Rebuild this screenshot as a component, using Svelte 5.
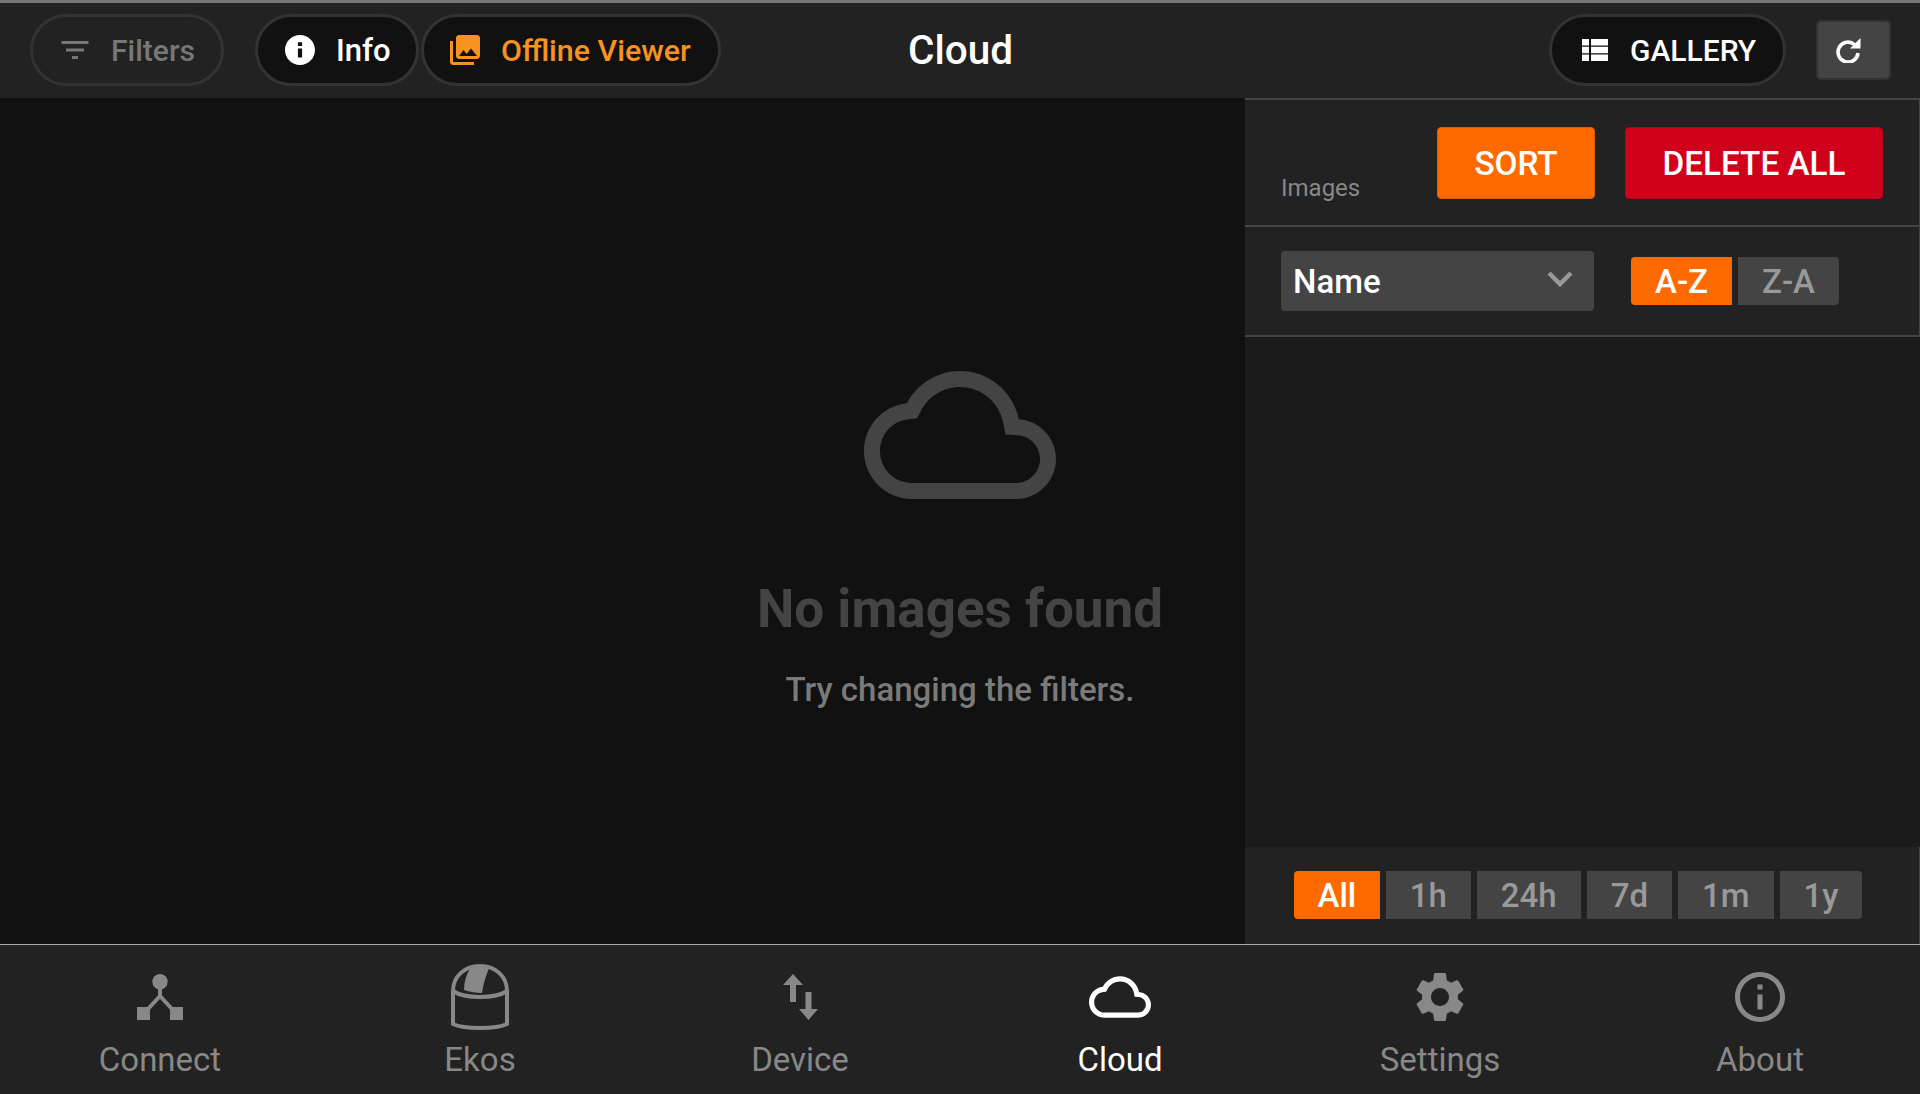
<script>
  const times = ["All", "1h", "24h", "7d", "1m", "1y"];
  const cloudPath =
    "M19.35 10.04C18.67 6.59 15.64 4 12 4 9.11 4 6.6 5.64 5.35 8.04 2.34 8.36 0 10.91 0 14c0 3.31 2.69 6 6 6h13c2.76 0 5-2.24 5-5 0-2.64-2.05-4.78-4.65-4.96zM19 18H6c-2.21 0-4-1.79-4-4 0-2.05 1.53-3.76 3.56-3.97l1.07-.11.5-.95C8.08 7.14 9.94 6 12 6c2.62 0 4.88 1.86 5.39 4.43l.3 1.5 1.53.11c1.56.1 2.78 1.41 2.78 2.96 0 1.65-1.35 3-3 3z";
</script>

<div class="app">
  <header class="topbar">
    <div class="top-left">
      <button type="button" class="pill ghost filters">
        <svg width="36" height="36" viewBox="0 0 24 24"><path d="M10 18h4v-2h-4v2zM3 6v2h18V6H3zm3 7h12v-2H6v2z" /></svg>
        Filters
      </button>
      <button type="button" class="pill info">
        <svg width="36" height="36" viewBox="0 0 24 24"><path d="M12 2C6.48 2 2 6.48 2 12s4.48 10 10 10 10-4.48 10-10S17.52 2 12 2zm1.4 15h-2.8v-6h2.8v6zm0-7.6h-2.8V6.8h2.8v2.6z" /></svg>
        Info
      </button>
      <button type="button" class="pill offline">
        <svg width="36" height="36" viewBox="0 0 24 24"><path d="M22 16V4c0-1.1-.9-2-2-2H8c-1.1 0-2 .9-2 2v12c0 1.1.9 2 2 2h12c1.1 0 2-.9 2-2zm-11-4l2.03 2.71L16 11l4 5H8l3-4zM2 6v14c0 1.1.9 2 2 2h14v-2H4V6H2z" /></svg>
        Offline Viewer
      </button>
    </div>
    <h1>Cloud</h1>
    <div class="top-right">
      <button type="button" class="pill gallery">
        <svg width="26" height="22" viewBox="0 0 26 22">
          <path d="M0 0h7v6.500H0zM9 0h17v6.500H9zM0 7.800h7v6.400H0zM9 7.800h17v6.400H9zM0 15.500h7V22H0zM9 15.500h17V22H9z" />
        </svg>
        GALLERY
      </button>
      <button type="button" class="refresh" aria-label="Refresh">
        <svg width="25" height="25" viewBox="0 0 25 25">
          <path d="M18.500 6.500A10 10 0 1 0 22 15" fill="none" stroke="currentColor" stroke-width="3.6" />
          <path d="M24.500 0v10.500H14z" />
        </svg>
      </button>
    </div>
  </header>

  <main class="content">
    <section class="viewer">
      <svg class="big-cloud" width="192" height="192" viewBox="0 0 24 24"><path d={cloudPath} /></svg>
      <h2>No images found</h2>
      <p>Try changing the filters.</p>
    </section>

    <aside class="side">
      <div class="side-head">
        <span class="side-label">Images</span>
        <div class="side-actions">
          <button type="button" class="action sort">SORT</button>
          <button type="button" class="action delete">DELETE ALL</button>
        </div>
      </div>

      <div class="side-sort">
        <div class="select">
          Name
          <svg width="28" height="18" viewBox="0 0 28 18">
            <path d="M3 3l11 11L25 3" fill="none" stroke="#999" stroke-width="4.5" />
          </svg>
        </div>
        <div class="order">
          <button type="button" class="seg on">A-Z</button>
          <button type="button" class="seg">Z-A</button>
        </div>
      </div>

      <div class="side-list"></div>

      <div class="side-times">
        {#each times as t, i}
          <button type="button" class="seg time" class:on={i === 0}>{t}</button>
        {/each}
      </div>
    </aside>
  </main>

  <nav class="tabs">
    <div class="tab">
      <span class="tab-icon">
        <svg width="46" height="46" viewBox="0 0 46 46">
          <circle cx="23" cy="7.700" r="7.700" />
          <path d="M23 14v8L11 35M23 22l12 13" fill="none" stroke="#888" stroke-width="4" />
          <path d="M0 33h13v13H0zM33 33h13v13H33z" />
        </svg>
      </span>
      Connect
    </div>
    <div class="tab">
      <span class="tab-icon">
        <svg width="58" height="66" viewBox="0 0 58 66">
          <path
            d="M2 29V27C2 12 14 2 29 2s27 10 27 25v33c-6 3-16 4-27 4s-21-1-27-4zM2 27c6 4 16 6 27 6s21-2 27-6"
            fill="none"
            stroke="#888"
            stroke-width="4"
          />
          <path d="M19 5c6-2 12-2 19-1-3 8-6 16-7 25-6 0-12-1-18-3 0-8 2-15 6-21z" />
        </svg>
      </span>
      Ekos
    </div>
    <div class="tab">
      <span class="tab-icon">
        <svg width="35" height="46" viewBox="0 0 35 46">
          <path d="M10 0l10 11h-7v17H7V11H0zM22.500 18h6v17H35L25.500 46 16 35h6.500z" />
        </svg>
      </span>
      Device
    </div>
    <div class="tab active">
      <span class="tab-icon">
        <svg width="62" height="62" viewBox="0 0 24 24"><path d={cloudPath} /></svg>
      </span>
      Cloud
    </div>
    <div class="tab">
      <span class="tab-icon">
        <svg width="60" height="60" viewBox="0 0 24 24">
          <path d="M19.14 12.94c.04-.3.06-.61.06-.94 0-.32-.02-.64-.07-.94l2.03-1.58c.18-.14.23-.41.12-.61l-1.92-3.32c-.12-.22-.37-.29-.59-.22l-2.39.96c-.5-.38-1.03-.7-1.62-.94l-.36-2.54c-.04-.24-.24-.41-.48-.41h-3.84c-.24 0-.43.17-.47.41l-.36 2.54c-.59.24-1.13.57-1.62.94l-2.39-.96c-.22-.08-.47 0-.59.22L2.74 8.87c-.12.21-.08.47.12.61l2.03 1.58c-.05.3-.09.63-.09.94s.02.64.07.94l-2.03 1.58c-.18.14-.23.41-.12.61l1.92 3.32c.12.22.37.29.59.22l2.39-.96c.5.38 1.03.7 1.62.94l.36 2.54c.05.24.24.41.48.41h3.84c.24 0 .44-.17.47-.41l.36-2.54c.59-.24 1.13-.56 1.62-.94l2.39.96c.22.08.47 0 .59-.22l1.92-3.32c.12-.22.07-.47-.12-.61l-2.01-1.58zM12 15.6c-1.98 0-3.6-1.62-3.6-3.6s1.62-3.6 3.6-3.6 3.6 1.62 3.6 3.6-1.62 3.6-3.6 3.6z" />
        </svg>
      </span>
      Settings
    </div>
    <div class="tab">
      <span class="tab-icon">
        <svg width="60" height="60" viewBox="0 0 24 24">
          <path d="M11 7h2v2h-2zm0 4h2v6h-2zm1-9C6.48 2 2 6.48 2 12s4.48 10 10 10 10-4.48 10-10S17.52 2 12 2zm0 18c-4.41 0-8-3.59-8-8s3.59-8 8-8 8 3.59 8 8-3.59 8-8 8z" />
        </svg>
      </span>
      About
    </div>
  </nav>
</div>

<style>
  :global(body) {
    margin: 0;
    background: #111;
  }

  .app {
    display: flex;
    flex-direction: column;
    height: 1094px;
    font-family: Roboto, "Liberation Sans", sans-serif;
    overflow: hidden;
  }

  button {
    font: inherit;
    cursor: pointer;
  }

  svg {
    display: block;
    flex: none;
    fill: currentColor;
  }

  .topbar {
    box-sizing: border-box;
    height: 98px;
    display: grid;
    grid-template-columns: 1fr auto 1fr;
    align-items: center;
    padding: 0 29px 1px 30px;
    border-top: 3px solid #777;
    background: #222;
  }

  .top-left,
  .top-right {
    display: flex;
    align-items: center;
  }

  .top-right {
    justify-content: flex-end;
  }

  h1 {
    margin: 0;
    color: #fff;
    font-size: 40.5px;
    font-weight: 500;
  }

  .pill {
    box-sizing: border-box;
    height: 72px;
    display: flex;
    align-items: center;
    border: 3px solid #333;
    border-radius: 36px;
    background: #111;
    color: #fff;
    font-size: 30px;
    font-weight: 500;
  }

  .filters {
    width: 194px;
    margin-right: 31px;
    padding: 0 0 0 24px;
    gap: 18px;
    background: transparent;
    color: #777;
  }

  .info {
    width: 164px;
    margin-right: 2px;
    padding: 0 0 0 24px;
    gap: 18px;
    font-size: 31px;
  }

  .offline {
    width: 300px;
    padding: 0 0 0 23px;
    gap: 18px;
    font-size: 30.4px;
    color: #f7931e;
  }

  .gallery {
    width: 237px;
    margin-right: 30px;
    padding: 0 0 0 30px;
    gap: 22px;
  }

  .refresh {
    box-sizing: border-box;
    width: 75px;
    height: 60px;
    display: flex;
    align-items: center;
    padding: 0 0 0 18px;
    border: 2px solid #333;
    border-radius: 5px;
    background: #444;
    color: #fff;
  }

  .content {
    display: flex;
    height: 846px;
  }

  .viewer {
    box-sizing: border-box;
    width: 1245px;
    display: flex;
    flex-direction: column;
    align-items: center;
    padding: 241px 0 0 675px;
    background: #111;
  }

  .big-cloud {
    color: #444;
  }

  h2 {
    margin: 48px 0 0;
    color: #444;
    font-size: 53px;
    line-height: 60px;
    font-weight: 700;
    white-space: nowrap;
  }

  .viewer p {
    margin: 31px 0 0;
    color: #7a7a7a;
    font-size: 33px;
    line-height: 40px;
    font-weight: 500;
    white-space: nowrap;
  }

  .side {
    flex: 1;
    display: flex;
    flex-direction: column;
    background: #222;
    box-shadow: inset -1px 0 0 #444;
  }

  .side-head {
    box-sizing: border-box;
    height: 129px;
    display: flex;
    align-items: flex-end;
    padding: 27px 37px 26px 36px;
    border-top: 2px solid #444;
    border-bottom: 2px solid #444;
  }

  .side-label {
    margin-bottom: -5px;
    color: #888;
    font-size: 24px;
    line-height: 32px;
  }

  .side-actions {
    display: flex;
    gap: 30px;
    margin-left: auto;
  }

  .action {
    box-sizing: border-box;
    height: 72px;
    padding-top: 2px;
    border-radius: 4px;
    color: #fff;
    font-size: 33.3px;
    font-weight: 500;
  }

  .sort {
    width: 158px;
    border: 1px solid #d95c00;
    background: #ff6a00;
  }

  .delete {
    width: 258px;
    border: 1px solid #b50017;
    background: #d0021b;
  }

  .side-sort {
    box-sizing: border-box;
    height: 110px;
    display: flex;
    align-items: center;
    gap: 37px;
    padding-left: 36px;
    border-bottom: 2px solid #444;
  }

  .select {
    box-sizing: border-box;
    width: 313px;
    height: 60px;
    display: flex;
    align-items: center;
    justify-content: space-between;
    padding: 0 20px 0 12px;
    border-radius: 4px;
    background: #444;
    color: #fff;
    font-size: 33px;
    font-weight: 500;
  }

  .select svg {
    margin-bottom: 4px;
  }

  .order {
    display: flex;
    gap: 6px;
  }

  .seg {
    box-sizing: border-box;
    height: 48px;
    border: 0;
    padding: 0;
    background: #444;
    color: #999;
    font-size: 33px;
    font-weight: 500;
  }

  .seg.on {
    background: #ff6a00;
    color: #fff;
  }

  .order .seg {
    width: 101px;
  }

  .seg:first-child {
    border-radius: 4px 0 0 4px;
  }

  .seg:last-child {
    border-radius: 0 4px 4px 0;
  }

  .side-list {
    flex: 1;
    background: #1b1b1b;
  }

  .side-times {
    box-sizing: border-box;
    height: 97px;
    display: flex;
    align-items: center;
    gap: 6px;
    padding: 0 0 1px 49px;
  }

  .time {
    padding: 0 24px;
  }

  .time.on {
    padding: 0 23.5px;
  }

  .tabs {
    box-sizing: border-box;
    height: 150px;
    display: grid;
    grid-template-columns: repeat(6, 1fr);
    border-top: 1px solid #aaa;
    background: #222;
  }

  .tab {
    display: flex;
    flex-direction: column;
    align-items: center;
    padding-top: 14px;
    color: #888;
    font-size: 33px;
    line-height: 40px;
    fill: #888;
  }

  .tab-icon {
    height: 76px;
    display: flex;
    align-items: center;
    justify-content: center;
    margin-bottom: 5px;
  }

  .tab.active {
    color: #fff;
  }
</style>
